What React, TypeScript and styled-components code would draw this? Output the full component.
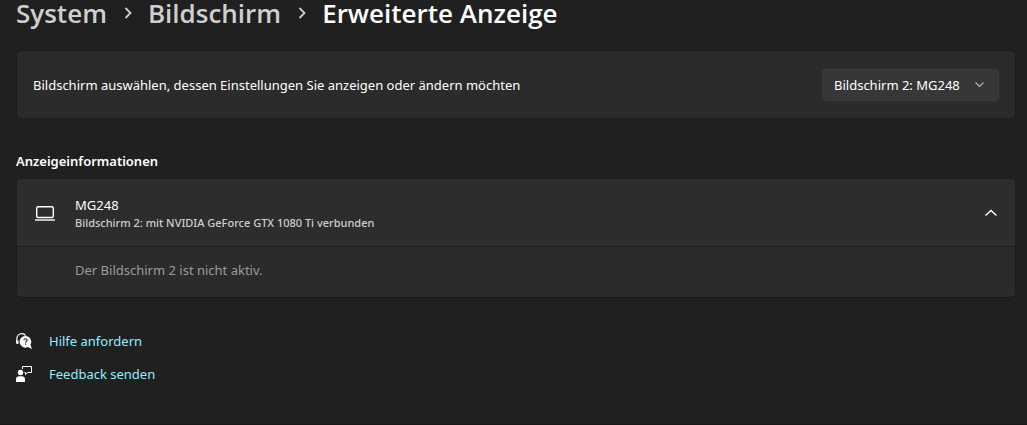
import React from "react";
import styled, { createGlobalStyle } from "styled-components";

const Global = createGlobalStyle`
  * { box-sizing: border-box; }
  html { background: #202020; }
  body {
    margin: 0;
    background: #202020;
    color: #ffffff;
    font-family: "Segoe UI", "Noto Sans", "Open Sans", sans-serif;
    font-size: 13px;
    line-height: 20px;
  }
  h1, h2, p, ol { margin: 0; padding: 0; font: inherit; }
`;

const Page = styled.main`
  min-height: 100vh;
  padding: 0 11px 32px 16px;
  border-bottom: 1px solid #1c171d;
`;

const Breadcrumb = styled.ol`
  display: flex;
  align-items: center;
  list-style: none;
  font-family: "Segoe UI", "Open Sans", sans-serif;
  font-size: 26px;
  font-weight: 600;
  line-height: 26px;
  white-space: nowrap;
`;

const Crumb = styled.li<{ $current?: boolean }>`
  display: flex;
  align-items: center;
  color: ${(p) => (p.$current ? "#ffffff" : "#cfcfcf")};

  a { color: inherit; text-decoration: none; }
  svg { margin: 0 15px 0 16px; }
`;

const Card = styled.section`
  border: 1px solid #1d1d1d;
  border-radius: 5px;
  background: #2b2b2b;
`;

const PickerCard = styled(Card)`
  display: flex;
  align-items: center;
  justify-content: space-between;
  margin-top: 24px;
  min-height: 69px;
  padding: 0 16px;
`;

const SelectBox = styled.div`
  display: grid;
  align-items: center;
  width: 177px;

  select, svg { grid-area: 1 / 1; }
  svg { justify-self: end; margin-right: 14px; pointer-events: none; }
`;

const Select = styled.select`
  appearance: none;
  width: 100%;
  height: 32px;
  padding: 0 32px 0 11px;
  border: 1px solid #3c3c3c;
  border-radius: 4px;
  background: #373737;
  color: #ffffff;
  font: inherit;
`;

const SectionTitle = styled.h2`
  margin: 32px 0 7px;
  font-weight: 600;
`;

const ExpanderHeader = styled.button`
  display: flex;
  align-items: center;
  width: 100%;
  min-height: 67px;
  padding: 0 17px;
  border: 0;
  border-radius: 4px 4px 0 0;
  background: #2d2d2d;
  color: inherit;
  font: inherit;
  text-align: left;
`;

const DeviceIcon = styled.svg`
  margin: 0 20px 0 1px;
`;

const DeviceText = styled.span`
  display: flex;
  flex-direction: column;
  flex: 1;
`;

const DeviceDetail = styled.span`
  color: #cfcfcf;
  font-size: 11px;
  font-weight: 500;
  line-height: 16px;
`;

const ExpanderBody = styled.p`
  padding: 13px 58px 17px;
  border-top: 1px solid #1d1d1d;
  color: #9b9b9b;
`;

const Links = styled.nav`
  display: flex;
  flex-direction: column;
  align-items: flex-start;
  gap: 13px;
  margin-top: 33px;
`;

const HelpLink = styled.a`
  display: flex;
  align-items: center;
  gap: 17px;
  color: #99ebff;
  text-decoration: none;

  svg { color: #ffffff; }
`;

const CrumbArrow = () => (
  <svg width="10" height="12" viewBox="0 0 10 12" fill="none" stroke="#cfcfcf" strokeWidth="1.8" aria-hidden="true">
    <path d="M2.5 1 7.5 6l-5 5" />
  </svg>
);

const HelpIcon = () => (
  <svg width="16" height="16" viewBox="0 0 16 16" fill="none" aria-hidden="true">
    <path d="M.8 9.8V6.2C.8 3 3 .7 5.8.7c1.7 0 3 .7 3.9 2" stroke="currentColor" strokeWidth="1.2" />
    <path d="M0 7.5h2.5V11H1.2A1.2 1.2 0 0 1 0 9.8z" fill="currentColor" />
    <path d="M9.5 3a5.8 5.8 0 0 1 5 8.7L16 16l-4.200-1.900A5.800 5.800 0 1 1 9.500 3z" fill="currentColor" />
    <path d="M7.9 7.3c0-1 .7-1.500 1.600-1.500s1.600.6 1.600 1.400c0 1.100-1.500 1.200-1.500 2.400M9.600 10.600v1.200" stroke="#202020" strokeWidth="1.1" />
  </svg>
);

const FeedbackIcon = () => (
  <svg width="16" height="16" viewBox="0 0 16 16" fill="none" aria-hidden="true">
    <circle cx="4.5" cy="6.5" r="2.7" fill="currentColor" />
    <path d="M0 16v-2.500A3.300 3.300 0 0 1 3.300 10.200h2.400A3.300 3.300 0 0 1 9 13.500V16z" fill="currentColor" />
    <path d="M6.5 3V.5h9v6h-4L9.500 8.500v-2H8.500" stroke="currentColor" />
  </svg>
);

export default function App() {
  return (
    <>
      <Global />
      <Page>
        <h1>
          <Breadcrumb>
            <Crumb><a href="#system">System</a><CrumbArrow /></Crumb>
            <Crumb><a href="#bildschirm">Bildschirm</a><CrumbArrow /></Crumb>
            <Crumb $current aria-current="page">Erweiterte Anzeige</Crumb>
          </Breadcrumb>
        </h1>

        <PickerCard>
          <label htmlFor="display">
            Bildschirm auswählen, dessen Einstellungen Sie anzeigen oder ändern möchten
          </label>
          <SelectBox>
            <Select id="display" defaultValue="2">
              <option value="2">Bildschirm 2: MG248</option>
            </Select>
            <svg width="11" height="7" viewBox="0 0 11 7" fill="none" stroke="#b4b4b4" strokeWidth="1.2" aria-hidden="true">
              <path d="M1.5 1.5l4 4 4-4" />
            </svg>
          </SelectBox>
        </PickerCard>

        <SectionTitle>Anzeigeinformationen</SectionTitle>
        <Card>
          <ExpanderHeader type="button" aria-expanded="true">
            <DeviceIcon width="20" height="16" viewBox="0 0 20 16" fill="none" stroke="#ffffff" aria-hidden="true">
              <rect x="1.7" y="1.7" width="16.6" height="10.8" rx="1.5" strokeWidth="1.4" />
              <path d="M0 15h20" strokeWidth="1.4" />
            </DeviceIcon>
            <DeviceText>
              <span>MG248</span>
              <DeviceDetail>Bildschirm 2: mit NVIDIA GeForce GTX 1080 Ti verbunden</DeviceDetail>
            </DeviceText>
            <svg width="14" height="8" viewBox="0 0 14 8" fill="none" stroke="#ffffff" strokeWidth="1.4" aria-hidden="true">
              <path d="M1.5 6.5 7 1.5l5.5 5" />
            </svg>
          </ExpanderHeader>
          <ExpanderBody>Der Bildschirm 2 ist nicht aktiv.</ExpanderBody>
        </Card>

        <Links aria-label="Hilfe">
          <HelpLink href="#hilfe"><HelpIcon />Hilfe anfordern</HelpLink>
          <HelpLink href="#feedback"><FeedbackIcon />Feedback senden</HelpLink>
        </Links>
      </Page>
    </>
  );
}
